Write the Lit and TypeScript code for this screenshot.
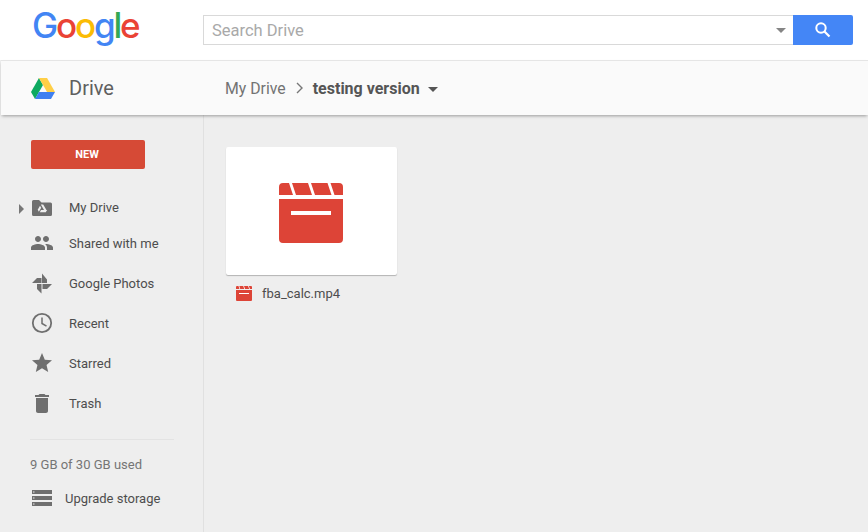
import { LitElement, html, css, svg } from "lit";
import { customElement } from "lit/decorators.js";

const clapper = (size: number) => html`<svg width=${size} height=${size * 60 / 64} viewBox="0 0 64 60" aria-hidden="true">
  <path fill="#dd4437" d="M4 0H60a4 4 0 0 1 4 4V12H0V4a4 4 0 0 1 4-4ZM0 16H64V56a4 4 0 0 1-4 4H4a4 4 0 0 1-4-4Z"/>
  <path fill="#fff" d="M10 0h3l4 12h-3ZM29 0h3l4 12h-3ZM48.500 0h3l4 12h-3ZM12 28H52V32H12Z"/>
</svg>`;

const icons = {
  drive: svg`<g transform="translate(0 3)"><path fill="#6f6f6f" d="M2 3.500A1.500 1.500 0 0 1 3.500 2H9l2.500 2.500H20.500A1.500 1.500 0 0 1 22 6V16.500A1.500 1.500 0 0 1 20.500 18H3.500A1.500 1.500 0 0 1 2 16.500Z"/><path fill="#eee" d="M10.800 6.500H13.200L17 13H14.600ZM10 7.700l1.200 2.100-2.300 4-1.200-2ZM9.800 14.200l1.200-2.100H17l-1.200 2.100Z"/></g>`,
  people: svg`<path fill="#6f6f6f" d="M16 11c1.660 0 2.990-1.340 2.990-3S17.660 5 16 5c-1.660 0-3 1.340-3 3s1.340 3 3 3zm-8 0c1.660 0 2.990-1.340 2.990-3S9.660 5 8 5C6.340 5 5 6.340 5 8s1.340 3 3 3zm0 2c-2.330 0-7 1.170-7 3.500V19h14v-2.500c0-2.330-4.670-3.500-7-3.500zm8 0c-.29 0-.62.02-.97.05 1.160.84 1.970 1.970 1.970 3.450V19h6v-2.500c0-2.330-4.670-3.500-7-3.500z"/>`,
  photos: svg`<path fill="#6f6f6f" d="M12 2.500L17 8.500V12H12ZM2 12L7 7H11.500V12ZM12.500 13H22L17 18H12.500ZM7 13H11.500V22.500L7 18Z"/>`,
  clock: svg`<circle cx="12" cy="12" r="9.200" fill="none" stroke="#6f6f6f" stroke-width="1.800"/><path fill="none" stroke="#6f6f6f" stroke-width="1.500" d="M12 6.500V12.500L16.500 15.200"/>`,
  star: svg`<path fill="#6f6f6f" d="M12 17.270L18.180 21l-1.640-7.030L22 9.240l-7.190-.61L12 2 9.190 8.630 2 9.240l5.460 4.730L5.820 21z"/>`,
  trash: svg`<path fill="#6f6f6f" d="M6 20c0 1.100.9 2 2 2h8c1.100 0 2-.9 2-2V7H6v13zM19 4h-3.500l-1-1h-5l-1 1H5v2h14V4z"/>`,
  storage: svg`<path fill="#6f6f6f" fill-rule="evenodd" d="M2 4H22V8H2ZM2 10H22V14H2ZM2 16H22V20H2ZM3 5.500V6.500H4.500V5.500ZM3 11.500V12.500H4.500V11.500ZM3 17.500V18.500H4.500V17.500Z"/>`,
};

const nav = [
  { icon: icons.drive, label: "My Drive", arrow: true, cls: "first" },
  { icon: icons.people, label: "Shared with me", arrow: false, cls: "" },
  { icon: icons.photos, label: "Google Photos", arrow: false, cls: "" },
  { icon: icons.clock, label: "Recent", arrow: false, cls: "" },
  { icon: icons.star, label: "Starred", arrow: false, cls: "" },
  { icon: icons.trash, label: "Trash", arrow: false, cls: "" },
];

@customElement("app-root")
export class AppRoot extends LitElement {
  static styles = css`
    :host {
      display: flex;
      flex-direction: column;
      width: 868px;
      height: 532px;
      overflow: hidden;
      background: #eee;
      font-family: Roboto, "Liberation Sans", sans-serif;
      color: #444;
    }
    .top {
      height: 60px;
      flex: none;
      background: #fff;
      display: flex;
      align-items: flex-start;
      padding-left: 32px;
      box-sizing: border-box;
    }
    .logo {
      width: 171px;
      flex: none;
      font-family: Inter, sans-serif;
      font-weight: 500;
      font-size: 35px;
      line-height: 50px;
      letter-spacing: -2.200px;
    }
    .b { color: #4285f4; }
    .r { color: #ea4335; }
    .y { color: #fbbc05; }
    .g { color: #34a853; }
    .search {
      margin-top: 15px;
      width: 650px;
      height: 30px;
      display: flex;
    }
    .field {
      flex: 1;
      box-sizing: border-box;
      border: 1px solid #d9d9d9;
      border-right: none;
      padding-left: 8px;
      display: flex;
      align-items: center;
      justify-content: space-between;
      font-size: 16.500px;
      color: #a9a9a9;
      background: #fff;
    }
    .caret {
      width: 0;
      height: 0;
      border-left: 5px solid transparent;
      border-right: 5px solid transparent;
      border-top: 5px solid #858585;
      margin-right: 7px;
    }
    .go {
      width: 60px;
      background: #4486f6;
      border-radius: 0 2px 2px 0;
      display: flex;
      align-items: center;
      justify-content: center;
    }
    .bar {
      height: 55px;
      flex: none;
      box-sizing: border-box;
      border-top: 1px solid #e5e5e5;
      background: #fafafa;
      box-shadow: 0 2px 3px -1px rgba(0, 0, 0, 0.35);
      display: flex;
      align-items: center;
      position: relative;
      z-index: 1;
      margin-left: 1px;
    }
    .brand {
      width: 224px;
      flex: none;
      display: flex;
      align-items: center;
      gap: 14px;
      padding-left: 30px;
      box-sizing: border-box;
      font-size: 20px;
      color: #5f5f5f;
    }
    .crumbs {
      display: flex;
      align-items: center;
      font-size: 15.800px;
      color: #737373;
    }
    .sep { margin: 0 8px 0 9px; display: flex; }
    .cur { font-weight: 700; font-size: 16px; color: #555; }
    .crumbs .caret { margin: 2px 0 0 8px; border-top-color: #555; }
    .body { flex: 1; display: flex; min-height: 0; margin-left: 1px; }
    .side {
      width: 203px;
      flex: none;
      box-sizing: border-box;
      border-right: 1px solid #e0e0e0;
      padding: 25px 0 0 0;
      display: flex;
      flex-direction: column;
    }
    .new {
      width: 114px;
      height: 29px;
      margin-left: 30px;
      margin-bottom: 22px;
      padding-right: 2px;
      box-sizing: border-box;
      background: #d64a36;
      border-radius: 2px;
      color: #fff;
      font-size: 11px;
      font-weight: 700;
      display: flex;
      align-items: center;
      justify-content: center;
    }
    .row {
      height: 40px;
      display: flex;
      align-items: center;
      font-size: 13px;
      color: #4d4d4d;
      position: relative;
      padding-left: 29px;
    }
    .row.first { height: 32px; }
    .row svg { flex: none; }
    .row .lbl { margin-left: 15px; }
    .arrow {
      position: absolute;
      left: 18px;
      top: 50%;
      margin-top: -3px;
      width: 0;
      height: 0;
      border-top: 5px solid transparent;
      border-bottom: 5px solid transparent;
      border-left: 5px solid #777;
    }
    .rule {
      width: 144px;
      height: 1px;
      background: #e3e3e3;
      margin: 16px 0 0 29px;
    }
    .used {
      margin: 17px 0 0 29px;
      font-size: 13px;
      line-height: 16px;
      color: #757575;
    }
    .up {
      height: 24px;
      margin-top: 13px;
      padding-left: 29px;
      display: flex;
      align-items: center;
      font-size: 13px;
      color: #4d4d4d;
    }
    .up .lbl { margin-left: 11px; }
    .main { flex: 1; padding: 32px 0 0 22px; }
    .card {
      width: 171px;
      height: 128px;
      box-sizing: border-box;
      padding: 36px 0 0 53px;
      background: #fff;
      border-radius: 2px;
      box-shadow: 0 1px 1px rgba(0, 0, 0, 0.25);
      display: flex;
      align-items: flex-start;
      justify-content: flex-start;
    }
    .file {
      margin: 11px 0 0 10px;
      display: flex;
      align-items: center;
      gap: 10px;
      font-size: 13px;
      color: #4d4d4d;
    }
  `;

  render() {
    return html`
      <div class="top">
        <div class="logo"><span class="b">G</span><span class="r">o</span><span class="y">o</span><span class="b">g</span><span class="g">l</span><span class="r">e</span></div>
        <div class="search">
          <div class="field">Search Drive<span class="caret"></span></div>
          <div class="go">
            <svg width="18" height="18" viewBox="0 0 18 18" aria-hidden="true">
              <circle cx="7" cy="7" r="4.700" fill="none" stroke="#fff" stroke-width="2"/>
              <path d="M10.500 10.500L15.500 15.500" stroke="#fff" stroke-width="2.200"/>
            </svg>
          </div>
        </div>
      </div>
      <div class="bar">
        <div class="brand">
          <svg width="24" height="21" viewBox="0 0 25 21" preserveAspectRatio="none" aria-hidden="true">
            <path fill="#0da960" d="M8.300 0L0 14 4.200 21 12.500 7Z"/>
            <path fill="#ffcf47" d="M8.300 0H16.700L25 14H16.700Z"/>
            <path fill="#3f7ff0" d="M4.200 21L8.300 14H25L20.800 21Z"/>
          </svg>
          <span>Drive</span>
        </div>
        <div class="crumbs">
          <span>My Drive</span>
          <span class="sep"><svg width="10" height="12" viewBox="0 0 10 12" aria-hidden="true"><path d="M2 1L7 6 2 11" fill="none" stroke="#777" stroke-width="1.400"/></svg></span>
          <span class="cur">testing version</span>
          <span class="caret"></span>
        </div>
      </div>
      <div class="body">
        <div class="side">
          <div class="new">NEW</div>
          ${nav.map(
            (n) => html`<div class="row ${n.cls}">
              ${n.arrow ? html`<span class="arrow"></span>` : ""}
              <svg width="24" height="24" viewBox="0 0 24 24" aria-hidden="true">${n.icon}</svg>
              <span class="lbl">${n.label}</span>
            </div>`
          )}
          <div class="rule"></div>
          <div class="used">9 GB of 30 GB used</div>
          <div class="up">
            <svg width="24" height="24" viewBox="0 0 24 24" aria-hidden="true">${icons.storage}</svg>
            <span class="lbl">Upgrade storage</span>
          </div>
        </div>
        <div class="main">
          <div class="card">${clapper(64)}</div>
          <div class="file">${clapper(16)}<span>fba_calc.mp4</span></div>
        </div>
      </div>
    `;
  }
}
